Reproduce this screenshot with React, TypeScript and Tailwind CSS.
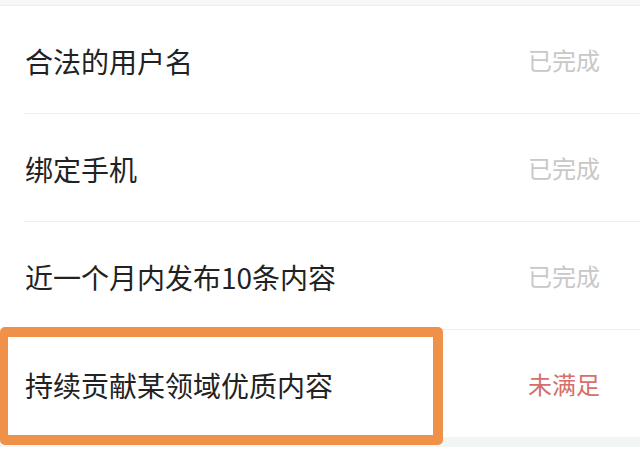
import React from "react";

const rows = [
  { label: "合法的用户名", status: "已完成", done: true },
  { label: "绑定手机", status: "已完成", done: true },
  { label: "近一个月内发布10条内容", status: "已完成", done: true },
  { label: "持续贡献某领域优质内容", status: "未满足", done: false },
];

export default function App() {
  return (
    <div
      className="relative w-[640px] h-[476px] bg-white overflow-hidden"
      style={{ fontFamily: '"Noto Sans CJK SC", "Noto Sans", sans-serif' }}
    >
      <div className="h-[6px] bg-[#f7f7f7] border-b border-[#eeeeee]" />
      {rows.map((r, i) => (
        <div key={r.label}>
          <div className="h-[107px] flex items-center justify-between pl-[25px] pr-[40px]">
            <span className="text-[28px] text-[#222222] leading-none pt-[3px]">{r.label}</span>
            <span
              className={
                r.done
                  ? "text-[24px] text-[#c8c8c8] leading-none"
                  : "text-[24px] text-[#d66e69] leading-none"
              }
            >
              {r.status}
            </span>
          </div>
          {i < rows.length - 1 && (
            <div className="h-px bg-[#efefef] ml-[24px]" />
          )}
        </div>
      ))}
      <div className="h-[10px] bg-[#f1f5f4]" />

      {/* annotation box */}
      <div className="absolute left-0 top-[327px] w-[443px] h-[118px] border-[10px] border-l-[8px] border-[#f0914a] rounded-[5px]" />
    </div>
  );
}
